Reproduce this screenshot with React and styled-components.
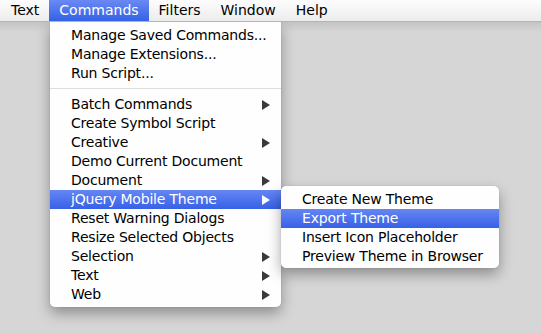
import styled, { createGlobalStyle } from 'styled-components'

const GlobalStyle = createGlobalStyle`
    html, body {
        margin: 0;
        padding: 0;
        background: #d6d6d6;
        height: 100%;
        overflow: hidden;
    }
    body {
        font-family: "DejaVu Sans", "Liberation Sans", sans-serif;
        font-size: 14px;
        color: #000;
    }
`

const mainItems = [
    { label: 'Manage Saved Commands...' },
    { label: 'Manage Extensions...' },
    { label: 'Run Script...' },
    { separator: true },
    { label: 'Batch Commands', sub: true },
    { label: 'Create Symbol Script' },
    { label: 'Creative', sub: true },
    { label: 'Demo Current Document' },
    { label: 'Document', sub: true },
    { label: 'jQuery Mobile Theme', sub: true, active: true, open: true },
    { label: 'Reset Warning Dialogs' },
    { label: 'Resize Selected Objects' },
    { label: 'Selection', sub: true },
    { label: 'Text', sub: true },
    { label: 'Web', sub: true },
]

const subItems = [
    { label: 'Create New Theme' },
    { label: 'Export Theme', active: true },
    { label: 'Insert Icon Placeholder' },
    { label: 'Preview Theme in Browser' },
]

function Arrow({ active }) {
    return (
        <ArrowIcon viewBox="0 0 8 10" width="8" height="10">
            <path d="M0 0 L8 5 L0 10 Z" fill={active ? '#fff' : '#3a3a3a'} />
        </ArrowIcon>
    )
}

function App() {
    return (
        <>
            <GlobalStyle />
            <MenuBar>
                <Title>Text</Title>
                <Title $active>Commands</Title>
                <Title>Filters</Title>
                <Title>Window</Title>
                <Title>Help</Title>
            </MenuBar>
            <Desk>
                <Dropdown>
                    {mainItems.map((item, i) =>
                        item.separator ? (
                            <Separator key={i} />
                        ) : (
                            <Item key={i} $active={item.active}>
                                <span>{item.label}</span>
                                {item.sub && <Arrow active={item.active} />}
                                {item.open && (
                                    <SubMenu>
                                        {subItems.map((s) => (
                                            <Item key={s.label} $active={s.active}>
                                                <span>{s.label}</span>
                                            </Item>
                                        ))}
                                    </SubMenu>
                                )}
                            </Item>
                        )
                    )}
                </Dropdown>
            </Desk>
        </>
    )
}

const MenuBar = styled.div`
    display: flex;
    align-items: stretch;
    height: 22px;
    padding-left: 1px;
    background: linear-gradient(#fdfdfd, #ececec);
    border-bottom: 1px solid #b4b4b4;
    box-sizing: border-box;
    position: relative;
    z-index: 2;
`

const Title = styled.div`
    display: flex;
    align-items: center;
    padding: 0 10px 1px;
    font-size: 14px;
    color: ${(p) => (p.$active ? '#fff' : '#000')};
    background: ${(p) => (p.$active ? 'linear-gradient(#6a89f4, #3461e6)' : 'transparent')};
`

const Desk = styled.div`
    height: 311px;
    background: linear-gradient(#c4c4c4 0px, #d6d6d6 10px);
    padding-left: 50px;
`

const Dropdown = styled.div`
    width: 231px;
    padding: 4px 0 3px;
    background: rgba(255, 255, 255, 0.97);
    border-radius: 0 0 5px 5px;
    box-shadow: 0 6px 14px rgba(0, 0, 0, 0.35), 0 0 1px rgba(0, 0, 0, 0.3);
    box-sizing: border-box;
`

const Item = styled.div`
    position: relative;
    display: flex;
    align-items: center;
    justify-content: space-between;
    height: 19px;
    padding: 0 11px 1px 21px;
    box-sizing: border-box;
    font-size: 14px;
    white-space: nowrap;
    color: ${(p) => (p.$active ? '#fff' : '#000')};
    background: ${(p) => (p.$active ? 'linear-gradient(#6586f3, #3761e7)' : 'transparent')};
    span {
        letter-spacing: -0.2px;
    }
`

const ArrowIcon = styled.svg`
    display: block;
    flex-shrink: 0;
    margin-top: 1px;
`

const Separator = styled.div`
    height: 12px;
    display: flex;
    align-items: center;
    &::after {
        content: '';
        flex: 1;
        height: 1px;
        margin-top: -1px;
        background: #dedede;
    }
`

const SubMenu = styled.div`
    position: absolute;
    left: 100%;
    top: -4px;
    width: 218px;
    padding: 4px 0 2px;
    background: rgba(255, 255, 255, 0.97);
    border-radius: 5px;
    box-shadow: 0 6px 14px rgba(0, 0, 0, 0.35), 0 0 1px rgba(0, 0, 0, 0.3);
    box-sizing: border-box;
    color: #000;
`

export default App
